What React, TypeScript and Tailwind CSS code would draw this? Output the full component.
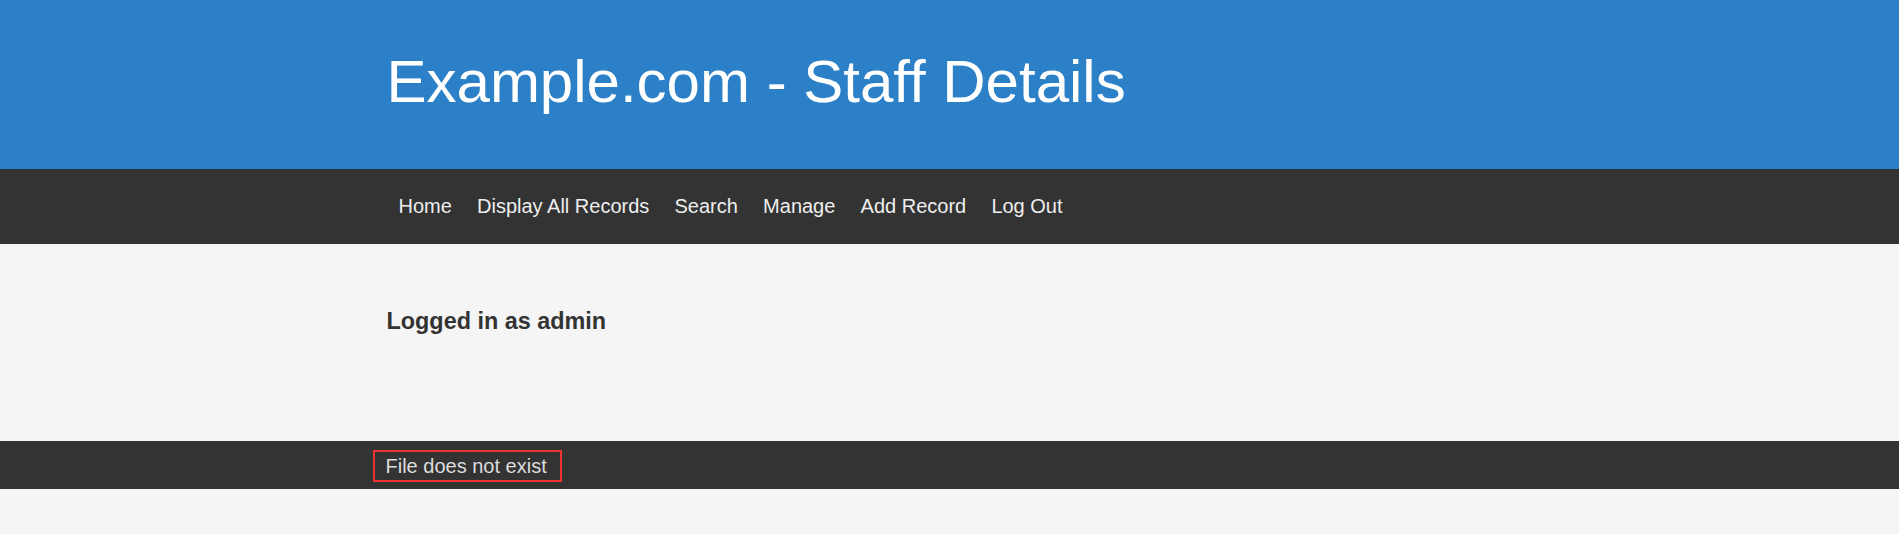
import React from "react";

const links = ["Home", "Display All Records", "Search", "Manage", "Add Record", "Log Out"];

export default function App() {
  return (
    <div className="min-h-screen bg-[#f5f5f5] font-['Liberation_Sans',Arial,sans-serif]">
      <header className="h-[169px] bg-[#2c80c8]">
        <div className="w-[1128px] mx-auto pt-[52px]">
          <h1 className="pl-[1px] text-[60px] leading-none font-normal text-white whitespace-nowrap">
            Example.com - Staff Details
          </h1>
        </div>
      </header>
      <nav className="h-[75px] bg-[#333333]">
        <div className="w-[1128px] mx-auto pt-[27px]">
          <ul className="flex gap-[25.2px] pl-[13px] text-[20px] leading-none text-[#eeeeee] whitespace-nowrap">
            {links.map((l) => (
              <li key={l}>
                <a href="#">{l}</a>
              </li>
            ))}
          </ul>
        </div>
      </nav>
      <main className="h-[197px]">
        <div className="w-[1128px] mx-auto pt-[66px] pl-[1px]">
          <h3 className="text-[23.4px] leading-none font-bold text-[#333333]">Logged in as admin</h3>
        </div>
      </main>
      <footer className="h-[48px] bg-[#333333]">
        <div className="w-[1128px] mx-auto pt-[9px]">
          <div className="inline-block -ml-[12.5px] border-2 border-[#ee3333] pl-[10.5px] pr-[13px] pt-[3px] pb-[2px] text-[20px] leading-[23px] text-[#dddddd]">
            File does not exist
          </div>
        </div>
      </footer>
    </div>
  );
}
